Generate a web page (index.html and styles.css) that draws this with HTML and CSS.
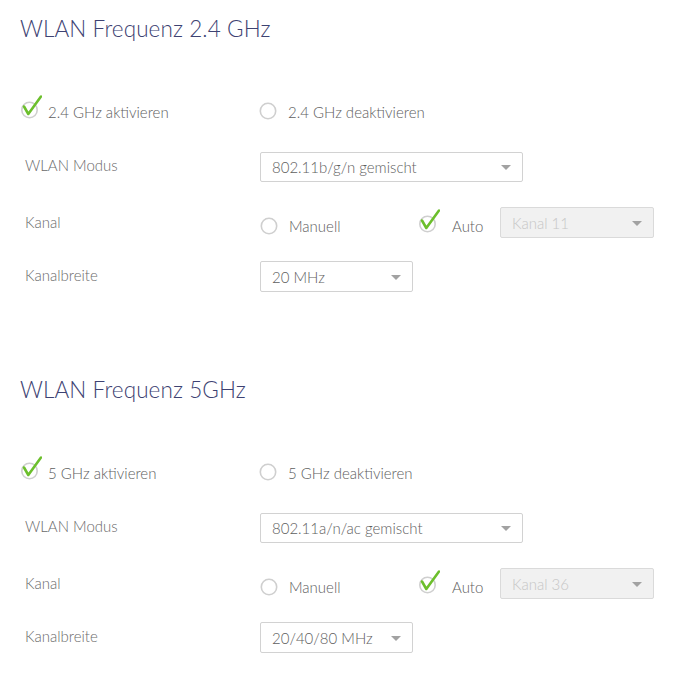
FILE: index.html
```html
<!DOCTYPE html>
<html lang="de">
<head>
<meta charset="utf-8">
<title>WLAN Frequenz</title>
<link rel="stylesheet" href="styles.css">
</head>
<body>
<div class="page">
  <section class="band">
    <h2 class="band-title">WLAN Frequenz 2.4 GHz</h2>
    <div class="row row-a">
      <div class="opt opt-check">
        <svg class="ico-check" width="22" height="24" viewBox="0 0 22 24"><circle cx="9.5" cy="15" r="7.7" fill="none" stroke="#cfcfcf" stroke-width="1.6"/><path d="M4 11.5 L8.3 19 L21 1.5" fill="none" stroke="#6cbf2c" stroke-width="2.6" stroke-linecap="round" stroke-linejoin="round"/></svg>
        <span>2.4 GHz aktivieren</span>
      </div>
      <div class="opt opt-radio">
        <svg class="ico-radio" width="18" height="18" viewBox="0 0 18 18"><circle cx="9" cy="9" r="7.7" fill="none" stroke="#cfcfcf" stroke-width="1.6"/></svg>
        <span>2.4 GHz deaktivieren</span>
      </div>
    </div>
    <div class="row row-b">
      <div class="label">WLAN Modus</div>
      <div class="select select-mode"><span>802.11b/g/n gemischt</span><i class="caret"></i></div>
    </div>
    <div class="row row-c">
      <div class="label">Kanal</div>
      <div class="channel">
        <div class="opt opt-radio opt-manual">
          <svg class="ico-radio" width="18" height="18" viewBox="0 0 18 18"><circle cx="9" cy="9" r="7.7" fill="none" stroke="#cfcfcf" stroke-width="1.6"/></svg>
          <span>Manuell</span>
        </div>
        <div class="opt opt-check opt-auto">
          <svg class="ico-check" width="22" height="24" viewBox="0 0 22 24"><circle cx="9.5" cy="15" r="7.7" fill="none" stroke="#cfcfcf" stroke-width="1.6"/><path d="M4 11.5 L8.3 19 L21 1.5" fill="none" stroke="#6cbf2c" stroke-width="2.6" stroke-linecap="round" stroke-linejoin="round"/></svg>
          <span>Auto</span>
        </div>
        <div class="select select-channel is-disabled"><span>Kanal 11</span><i class="caret"></i></div>
      </div>
    </div>
    <div class="row row-d">
      <div class="label">Kanalbreite</div>
      <div class="select select-width"><span>20 MHz</span><i class="caret"></i></div>
    </div>
  </section>

  <section class="band">
    <h2 class="band-title">WLAN Frequenz 5GHz</h2>
    <div class="row row-a">
      <div class="opt opt-check">
        <svg class="ico-check" width="22" height="24" viewBox="0 0 22 24"><circle cx="9.5" cy="15" r="7.7" fill="none" stroke="#cfcfcf" stroke-width="1.6"/><path d="M4 11.5 L8.3 19 L21 1.5" fill="none" stroke="#6cbf2c" stroke-width="2.6" stroke-linecap="round" stroke-linejoin="round"/></svg>
        <span>5 GHz aktivieren</span>
      </div>
      <div class="opt opt-radio">
        <svg class="ico-radio" width="18" height="18" viewBox="0 0 18 18"><circle cx="9" cy="9" r="7.7" fill="none" stroke="#cfcfcf" stroke-width="1.6"/></svg>
        <span>5 GHz deaktivieren</span>
      </div>
    </div>
    <div class="row row-b">
      <div class="label">WLAN Modus</div>
      <div class="select select-mode"><span>802.11a/n/ac gemischt</span><i class="caret"></i></div>
    </div>
    <div class="row row-c">
      <div class="label">Kanal</div>
      <div class="channel">
        <div class="opt opt-radio opt-manual">
          <svg class="ico-radio" width="18" height="18" viewBox="0 0 18 18"><circle cx="9" cy="9" r="7.7" fill="none" stroke="#cfcfcf" stroke-width="1.6"/></svg>
          <span>Manuell</span>
        </div>
        <div class="opt opt-check opt-auto">
          <svg class="ico-check" width="22" height="24" viewBox="0 0 22 24"><circle cx="9.5" cy="15" r="7.7" fill="none" stroke="#cfcfcf" stroke-width="1.6"/><path d="M4 11.5 L8.3 19 L21 1.5" fill="none" stroke="#6cbf2c" stroke-width="2.6" stroke-linecap="round" stroke-linejoin="round"/></svg>
          <span>Auto</span>
        </div>
        <div class="select select-channel is-disabled"><span>Kanal 36</span><i class="caret"></i></div>
      </div>
    </div>
    <div class="row row-d">
      <div class="label">Kanalbreite</div>
      <div class="select select-width"><span>20/40/80 MHz</span><i class="caret"></i></div>
    </div>
  </section>
</div>
</body>
</html>
```

FILE: styles.css
```css
* { box-sizing: border-box; }

html, body {
  margin: 0;
  padding: 0;
  background: #ffffff;
}

body {
  font-family: Lato, "Open Sans", "DejaVu Sans", sans-serif;
  font-size: 15px;
  font-weight: 300;
  color: #5e5e5e;
}

.page {
  width: 690px;
  padding-left: 20px;
}

.band {
  height: 361px;
}

.band-title {
  margin: 0;
  padding-top: 14px;
  height: 83px;
  font-size: 22.5px;
  line-height: 30px;
  font-weight: 300;
  color: #3d4272;
  letter-spacing: 0.1px;
}

.row {
  display: grid;
  grid-template-columns: 239px 1fr;
  align-items: center;
}

.row-a { height: 56px; }
.row-b { height: 56px; }
.row-c { height: 57px; }
.row-d { height: 49px; }

.label {
  padding-left: 5px;
  margin-bottom: 4px;
  color: #6a6a6a;
}

.opt {
  display: flex;
  align-items: center;
  white-space: nowrap;
}

.opt-check .ico-check {
  flex: none;
  margin-top: -9px;
  margin-right: 6px;
}

.opt-check span { margin-top: 1px; }

.opt-radio .ico-radio {
  flex: none;
  margin-right: 11px;
}

.opt-radio span { margin-top: 1px; }

.channel {
  display: flex;
  align-items: center;
}

.opt-manual {
  width: 158px;
  margin-left: 1px;
  margin-top: 4px;
}

.opt-auto {
  width: 82px;
  margin-top: 4px;
}

.opt-auto .ico-check { margin-right: 12px; }

.select {
  position: relative;
  display: flex;
  align-items: center;
  height: 31px;
  padding-left: 11px;
  border: 1.5px solid #d2d2d2;
  border-radius: 2px;
  background: #ffffff;
  color: #5e5e5e;
  white-space: nowrap;
}

.select-mode { width: 263px; margin-left: 1px; height: 30px; }
.select-width { width: 153px; margin-left: 1px; }
.select-channel { width: 154px; margin-top: -2px; }

.select.is-disabled {
  background: #f1f1f1;
  color: #c6c6c6;
  border-color: #dadada;
}

.caret {
  position: absolute;
  right: 11px;
  top: 50%;
  margin-top: -2px;
  width: 0;
  height: 0;
  border-left: 5px solid transparent;
  border-right: 5px solid transparent;
  border-top: 5px solid #a2a2a2;
}
```
